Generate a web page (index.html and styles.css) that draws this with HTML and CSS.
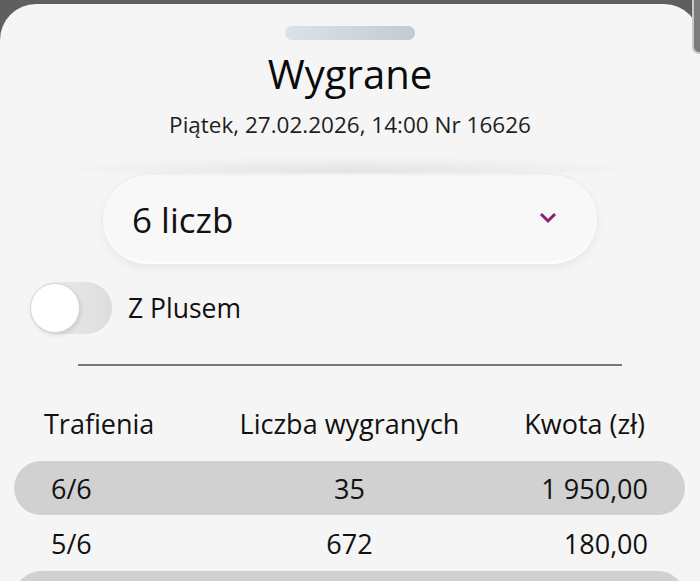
FILE: index.html
```html
<!DOCTYPE html>
<html lang="pl">
<head>
    <meta charset="UTF-8">
    <meta name="viewport" content="width=device-width, initial-scale=1.0">
    <title>Wygrane</title>
    <link rel="stylesheet" href="styles.css">
</head>
<body>
    <div class="edge-tab"></div>
    <div class="sheet">
        <div class="handle"></div>
        <h1 class="title">Wygrane</h1>
        <p class="draw-info">Piątek, 27.02.2026, 14:00 Nr 16626</p>
        <div class="shade"></div>
        <div class="select">
            <span>6 liczb</span>
            <svg class="chevron" width="18" height="12" viewBox="0 0 18 12">
                <path d="M2 2 L9 9 L16 2" fill="none" stroke="#86207a" stroke-width="3"/>
            </svg>
        </div>
        <div class="plus-row">
            <div class="toggle"><div class="knob"></div></div>
            <span class="plus-label">Z Plusem</span>
        </div>
        <div class="divider"></div>
        <div class="table">
            <div class="row head">
                <span class="c1">Trafienia</span>
                <span class="c2">Liczba wygranych</span>
                <span class="c3">Kwota (zł)</span>
            </div>
            <div class="row shaded">
                <span class="c1">6/6</span>
                <span class="c2">35</span>
                <span class="c3">1 950,00</span>
            </div>
            <div class="row">
                <span class="c1">5/6</span>
                <span class="c2">672</span>
                <span class="c3">180,00</span>
            </div>
            <div class="row shaded"></div>
        </div>
    </div>
</body>
</html>
```

FILE: styles.css
```css
body {
    margin: 0;
    padding: 0;
    background: #5f5f5f;
    font-family: 'Open Sans', 'Noto Sans', sans-serif;
    color: #111;
    height: 581px;
    overflow: hidden;
    position: relative;
}
.sheet {
    margin-top: 4px;
    background: #f5f5f5;
    border-radius: 36px 36px 0 0;
    height: 577px;
    display: flex;
    flex-direction: column;
    align-items: center;
    overflow: hidden;
}
.sheet > * {
    flex-shrink: 0;
}
.edge-tab {
    position: absolute;
    top: 0;
    right: 0;
    width: 6px;
    height: 52px;
    background: #7c7c7c;
    border-left: 2px solid #c9c9c9;
    border-bottom: 2px solid #c9c9c9;
    border-bottom-left-radius: 7px;
    z-index: 2;
}
.handle {
    margin-top: 22px;
    width: 130px;
    height: 14px;
    border-radius: 7px;
    background: linear-gradient(90deg, #dde2e8, #c4cad1);
}
.title {
    margin: 10px 0 0;
    font-size: 40px;
    line-height: 48px;
    font-weight: 400;
    color: #0a0a0a;
}
.draw-info {
    margin: 12px 0 0;
    font-size: 22.5px;
    line-height: 30px;
    color: #1e1e1e;
}
.shade {
    margin-top: 16px;
    width: 600px;
    height: 17px;
    background: radial-gradient(ellipse at 50% 85%, rgba(0, 0, 0, 0.07), rgba(0, 0, 0, 0) 70%);
}
.select {
    margin-top: 2px;
    width: 494px;
    height: 89px;
    box-sizing: border-box;
    border-radius: 45px;
    background: #f8f8f8;
    box-shadow: 0 4px 10px rgba(0, 0, 0, 0.06), inset 0 -2px 3px rgba(255, 255, 255, 0.9), 0 -1px 2px rgba(0, 0, 0, 0.04);
    display: flex;
    align-items: center;
    justify-content: space-between;
    padding: 0 40px 0 29px;
    font-size: 35px;
}
.chevron {
    margin-top: -3px;
}
.plus-row {
    align-self: stretch;
    margin-top: 18px;
    padding-left: 30px;
    display: flex;
    align-items: center;
    gap: 16px;
}
.toggle {
    width: 82px;
    height: 52px;
    border-radius: 26px;
    background: linear-gradient(90deg, #f0f0f0, #dcdcdc);
    position: relative;
}
.knob {
    position: absolute;
    left: 0;
    top: 1px;
    width: 48px;
    height: 48px;
    border-radius: 50%;
    background: #fff;
    border: 1px solid #d6d6d6;
    box-shadow: 1px 2px 4px rgba(0, 0, 0, 0.12);
}
.plus-label {
    font-size: 26.5px;
}
.divider {
    margin-top: 30px;
    width: 544px;
    height: 2px;
    background: #777;
}
.table {
    align-self: stretch;
    margin-top: 34px;
    display: flex;
    flex-direction: column;
}
.row {
    display: grid;
    grid-template-columns: 1fr 1fr 1fr;
    align-items: center;
    margin: 0 15px 1px 14px;
    padding: 0 37px;
    height: 54px;
    border-radius: 27px;
    font-size: 27px;
}
.row > span {
    white-space: nowrap;
}
.row.head {
    height: 46px;
    margin-bottom: 15px;
}
.row.head .c1 {
    margin-left: -7px;
}
.row.head .c3 {
    margin-right: 3px;
}
.row.shaded {
    background: #d1d1d1;
}
.c2 {
    text-align: center;
}
.c3 {
    text-align: right;
}
```
